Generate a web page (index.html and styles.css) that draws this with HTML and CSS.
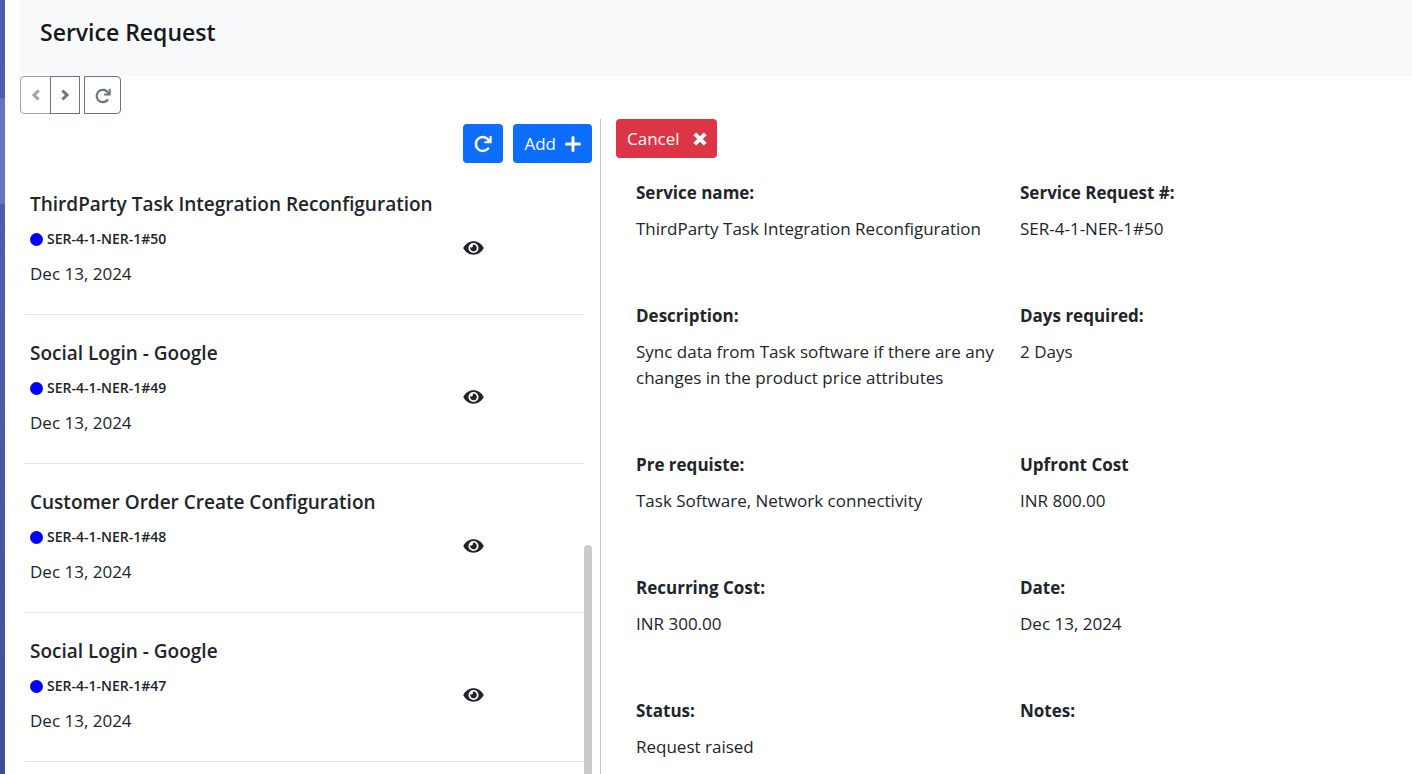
FILE: index.html
```html
<!DOCTYPE html>
<html lang="en">
<head>
<meta charset="utf-8">
<meta name="viewport" content="width=device-width, initial-scale=1">
<title>Service Request</title>
<link rel="stylesheet" href="styles.css">
</head>
<body>
<svg class="sprite" aria-hidden="true">
  <symbol id="i-redo" viewBox="0 0 16 16"><path d="M12.600 12A6.200 6.200 0 1 1 13.300 5" fill="none" stroke="currentColor" stroke-width="2.200" stroke-linecap="round"/><path d="M13.800.8h1.900v6.600H9.200V5.600h4.600z" fill="currentColor"/></symbol>
  <symbol id="i-eye" viewBox="0 0 576 512"><path fill="currentColor" d="M572.500 241.400C518.300 135.600 410.900 64 288 64S57.700 135.600 3.500 241.400a32.400 32.400 0 0 0 0 29.200C57.700 376.400 165.100 448 288 448s230.300-71.600 284.500-177.400a32.400 32.400 0 0 0 0-29.200zM288 400a144 144 0 1 1 144-144 143.900 143.900 0 0 1-144 144zm0-240a95.300 95.300 0 0 0-25.300 3.800 47.900 47.900 0 0 1-66.900 66.900A95.800 95.800 0 1 0 288 160z"/></symbol>
</svg>
<div class="app">
  <aside class="rail"></aside>
  <main class="page">
    <header class="page-header"><h1 class="page-title">Service Request</h1></header>
    <nav class="pager" aria-label="Pages">
      <div class="pager-group">
        <button class="pager-btn first" disabled aria-label="Previous"><svg class="chevron" viewBox="0 0 10 12"><path d="M7.600 1.500L3 6l4.600 4.500"/></svg></button>
        <button class="pager-btn last" aria-label="Next"><svg class="chevron" viewBox="0 0 10 12"><path d="M2.400 1.500L7 6l-4.600 4.500"/></svg></button>
      </div>
      <button class="pager-btn single" aria-label="Reload"><svg class="icon-16"><use href="#i-redo"/></svg></button>
    </nav>
    <div class="columns">
      <section class="list-panel">
        <div class="toolbar">
          <button class="btn primary square" aria-label="Refresh list"><svg class="icon-18"><use href="#i-redo"/></svg></button>
          <button class="btn primary">Add<svg class="icon-16" viewBox="0 0 16 16"><path class="thick" d="M8 1.500v13M1.500 8h13"/></svg></button>
        </div>
        <div class="list-wrap">
          <ul class="list">
            <li class="item"><div class="info"><h2 class="name">ThirdParty Task Integration Reconfiguration</h2><p class="code"><span class="dot"></span>SER-4-1-NER-1#50</p><p class="date">Dec 13, 2024</p></div><button class="view" aria-label="View"><svg class="eye"><use href="#i-eye"/></svg></button></li>
            <li class="item"><div class="info"><h2 class="name">Social Login - Google</h2><p class="code"><span class="dot"></span>SER-4-1-NER-1#49</p><p class="date">Dec 13, 2024</p></div><button class="view" aria-label="View"><svg class="eye"><use href="#i-eye"/></svg></button></li>
            <li class="item"><div class="info"><h2 class="name">Customer Order Create Configuration</h2><p class="code"><span class="dot"></span>SER-4-1-NER-1#48</p><p class="date">Dec 13, 2024</p></div><button class="view" aria-label="View"><svg class="eye"><use href="#i-eye"/></svg></button></li>
            <li class="item"><div class="info"><h2 class="name">Social Login - Google</h2><p class="code"><span class="dot"></span>SER-4-1-NER-1#47</p><p class="date">Dec 13, 2024</p></div><button class="view" aria-label="View"><svg class="eye"><use href="#i-eye"/></svg></button></li>
          </ul>
          <div class="thumb"></div>
        </div>
      </section>
      <section class="detail-panel">
        <button class="btn danger">Cancel<svg class="icon-16" viewBox="0 0 16 16"><path class="thick cross" d="M2.800 2.800l10.400 10.400M13.200 2.800l-10.400 10.400"/></svg></button>
        <dl class="details">
          <div class="field"><dt>Service name:</dt><dd>ThirdParty Task Integration Reconfiguration</dd></div>
          <div class="field"><dt>Service Request #:</dt><dd>SER-4-1-NER-1#50</dd></div>
          <div class="field"><dt>Description:</dt><dd>Sync data from Task software if there are any changes in the product price attributes</dd></div>
          <div class="field"><dt>Days required:</dt><dd>2 Days</dd></div>
          <div class="field"><dt>Pre requiste:</dt><dd>Task Software, Network connectivity</dd></div>
          <div class="field"><dt>Upfront Cost</dt><dd>INR 800.00</dd></div>
          <div class="field"><dt>Recurring Cost:</dt><dd>INR 300.00</dd></div>
          <div class="field"><dt>Date:</dt><dd>Dec 13, 2024</dd></div>
          <div class="field"><dt>Status:</dt><dd>Request raised</dd></div>
          <div class="field"><dt>Notes:</dt><dd></dd></div>
        </dl>
      </section>
    </div>
  </main>
</div>
</body>
</html>
```
FILE: styles.css
```css
* { box-sizing: border-box; }
body { margin: 0; background: #fff; color: #212529; font: 17px/26px "Segoe UI", "Open Sans", "Noto Sans", sans-serif; }
h1, h2, p, ul, dl, dd { margin: 0; padding: 0; }
button { font: inherit; cursor: pointer; }
.sprite { display: none; }
.app { display: flex; height: 100vh; overflow: hidden; }
.rail { flex: none; width: 5px; margin-right: 15px; background: linear-gradient(#6573c3, #6573c3) 0 98px / 100% 106px no-repeat, linear-gradient(#4d5fae, #4c5eab 40%, #3f4e99); }
.page { flex: 1; min-width: 0; display: flex; flex-direction: column; }
.page-header { flex: none; padding: 16px 20px 28px; background: #f8f9fb; }
.page-title { font-size: 23px; line-height: 32px; font-weight: 600; color: #16181b; }
.pager { flex: none; display: flex; gap: 4px; height: 38px; margin-bottom: 5px; }
.pager-group { display: flex; }
.pager-btn { display: flex; align-items: center; justify-content: center; width: 30px; padding: 0; border: 1px solid #6c757d; background: #fff; color: #6c757d; }
.pager-btn.first { width: 31px; margin-right: -1px; border-radius: 4px 0 0 4px; opacity: .65; }
.pager-btn.last { position: relative; }
.pager-btn.single { width: 37px; padding-top: 2px; border-radius: 0 4px 4px 0; }
.chevron { width: 10px; height: 12px; fill: none; stroke: currentColor; stroke-width: 3; }
.icon-16 { width: 16px; height: 16px; }
.icon-18 { width: 18px; height: 18px; }
.thick { fill: none; stroke: currentColor; stroke-width: 3; stroke-linecap: round; }
.cross { stroke-width: 4; stroke-linecap: butt; }
.columns { flex: 1; min-height: 0; display: grid; grid-template-columns: 5fr 7fr; }
.list-panel { display: flex; flex-direction: column; min-height: 0; margin-right: -1px; padding: 5px 8px 0 5px; border-right: 1px solid #c8cacc; }
.toolbar { display: flex; justify-content: flex-end; gap: 10px; margin-bottom: 3px; }
.btn { display: inline-flex; align-items: center; gap: 9px; height: 39px; padding: 0 10px; border: 1px solid transparent; border-radius: 4px; color: #fff; }
.primary { background: #0d6efd; }
.square { width: 40px; justify-content: center; padding: 0; }
.danger { background: #dc3545; gap: 12px; padding: 0 8px 0 10px; }
.list-wrap { position: relative; flex: 1; min-height: 0; padding-right: 8px; overflow: hidden; }
.list { list-style: none; }
.item { display: grid; grid-template-columns: 1fr 126px; align-items: center; padding: 26px 0 27px 5px; border-bottom: 1px solid #e3e4e6; }
.name { margin-bottom: 11px; font-size: 19px; line-height: 24px; font-weight: 600; white-space: nowrap; }
.code { display: flex; align-items: center; gap: 4px; margin-bottom: 10px; font-size: 14px; line-height: 24px; font-weight: 600; }
.dot { width: 13px; height: 13px; border-radius: 50%; background: #00f; }
.view { display: flex; width: 32px; margin-top: 16px; padding: 6px 5px; border: 0; background: none; color: #212529; }
.eye { width: 21px; height: 18px; }
.thumb { position: absolute; right: 0; top: 379px; bottom: 0; width: 8px; border-radius: 4px 4px 0 0; background: #cbcbcb; }
.detail-panel { min-width: 0; padding: 0 28px 0 16px; }
.details { display: grid; grid-template-columns: 1fr 1fr; margin-top: 22px; }
.field { padding: 0 4px 61px 20px; }
.field dt { margin-bottom: 10px; font-weight: 700; }
```
